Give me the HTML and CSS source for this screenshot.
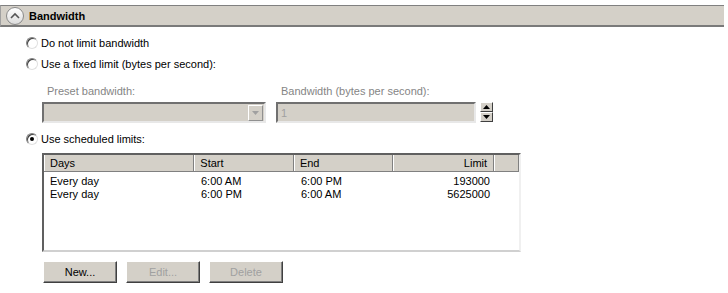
FILE: index.html
```html
<!DOCTYPE html>
<html lang="en">
<head>
  <meta charset="UTF-8" />
  <title>Bandwidth</title>
  <link rel="stylesheet" href="styles.css">
</head>
<body>

  <div class="section-header">
    <span class="collapse-btn">
      <svg width="12" height="8" viewBox="0 0 12 8"><path d="M2 6 L6 2 L10 6" fill="none" stroke="#555" stroke-width="1.6"/></svg>
    </span>
    <span class="section-title">Bandwidth</span>
  </div>

  <div class="content">
    <label class="radio-row"><span class="radio"></span>Do not limit bandwidth</label>
    <label class="radio-row"><span class="radio"></span>Use a fixed limit (bytes per second):</label>

    <div class="fixed-limit">
      <div class="field preset">
        <div class="field-label">Preset bandwidth:</div>
        <div class="combo">
          <span class="combo-value"></span>
          <span class="combo-arrow"><svg width="7" height="4" viewBox="0 0 7 4"><path d="M0 0 H7 L3.5 4 Z" fill="#a0a0a0"/></svg></span>
        </div>
      </div>
      <div class="field amount">
        <div class="field-label">Bandwidth (bytes per second):</div>
        <div class="spin-wrap">
          <div class="textbox">1</div>
          <div class="spin">
            <span class="spin-btn"><svg width="7" height="4" viewBox="0 0 7 4"><path d="M0 4 H7 L3.5 0 Z" fill="#000"/></svg></span>
            <span class="spin-btn"><svg width="7" height="4" viewBox="0 0 7 4"><path d="M0 0 H7 L3.5 4 Z" fill="#000"/></svg></span>
          </div>
        </div>
      </div>
    </div>

    <label class="radio-row scheduled"><span class="radio checked"></span>Use scheduled limits:</label>

    <div class="listview">
      <div class="list-head">
        <span class="col days">Days</span>
        <span class="col start">Start</span>
        <span class="col end">End</span>
        <span class="col limit">Limit</span>
        <span class="col filler"></span>
      </div>
      <div class="list-row">
        <span class="col days">Every day</span>
        <span class="col start">6:00 AM</span>
        <span class="col end">6:00 PM</span>
        <span class="col limit">193000</span>
      </div>
      <div class="list-row">
        <span class="col days">Every day</span>
        <span class="col start">6:00 PM</span>
        <span class="col end">6:00 AM</span>
        <span class="col limit">5625000</span>
      </div>
    </div>

    <div class="buttons">
      <button type="button">New...</button>
      <button type="button" disabled>Edit...</button>
      <button type="button" disabled>Delete</button>
    </div>
  </div>

</body>
</html>
```

FILE: styles.css
```css
* {
  box-sizing: border-box;
  margin: 0;
  padding: 0;
}

body {
  background-color: #fff;
  font-family: 'Liberation Sans', Arial, sans-serif;
  font-size: 11px;
  color: #000;
  width: 728px;
  height: 293px;
  overflow: hidden;
}

.section-header {
  display: flex;
  align-items: center;
  height: 22px;
  margin-top: 5px;
  margin-right: 4px;
  padding-left: 5px;
  background-color: #d4d0c8;
  border-top: 1px solid #808080;
  border-bottom: 2px solid #7a7a7a;
  border-left: 1px solid #a0a0a0;
}

.collapse-btn {
  display: flex;
  align-items: center;
  justify-content: center;
  width: 18px;
  height: 18px;
  border-radius: 50%;
  border: 1px solid #8a8a8a;
  background: linear-gradient(#ffffff, #dcdcdc);
}

.section-title {
  font-weight: bold;
  margin-left: 5px;
}

.content {
  padding-left: 26px;
}

.radio-row {
  display: flex;
  align-items: center;
  height: 21px;
}

.radio-row:first-child {
  margin-top: 5px;
}

.radio {
  width: 12px;
  height: 12px;
  margin-right: 3px;
  border-radius: 50%;
  background: #fff;
  border: 1px solid;
  border-color: #808080 #e0e0e0 #e0e0e0 #808080;
  box-shadow: inset 1px 1px 0 #404040;
  position: relative;
}

.radio.checked::after {
  content: '';
  position: absolute;
  left: 3px;
  top: 3px;
  width: 4px;
  height: 4px;
  border-radius: 50%;
  background: #000;
}

.fixed-limit {
  display: flex;
  margin-top: 11px;
  margin-left: 16px;
}

.field-label {
  color: #858585;
  padding-left: 5px;
  height: 17px;
}

.field.preset {
  width: 224px;
}

.field.amount {
  margin-left: 10px;
}

.combo,
.textbox {
  display: flex;
  align-items: center;
  height: 21px;
  background-color: #d4d0c8;
  border: 2px solid;
  border-color: #707070 #e8e8e8 #e8e8e8 #707070;
}

.combo {
  justify-content: flex-end;
  padding-right: 1px;
}

.combo-arrow {
  display: flex;
  align-items: center;
  justify-content: center;
  width: 15px;
  height: 16px;
  border: 1px solid;
  border-color: #fff #909090 #909090 #fff;
}

.spin-wrap {
  display: flex;
}

.textbox {
  width: 200px;
  color: #a0a0a0;
  padding-left: 3px;
}

.spin {
  display: flex;
  flex-direction: column;
  margin-left: 4px;
  width: 13px;
}

.spin-btn {
  display: flex;
  align-items: center;
  justify-content: center;
  height: 10px;
  background-color: #d4d0c8;
  border: 1px solid;
  border-color: #fff #404040 #404040 #fff;
}

.radio-row.scheduled {
  margin-top: 5px;
}

.listview {
  width: 479px;
  height: 99px;
  margin-left: 16px;
  margin-top: 4px;
  border: 2px solid;
  border-color: #606060 #f0f0f0 #d0d0d0 #606060;
  background: #fff;
}

.list-head {
  display: flex;
  height: 17px;
  background-color: #d4d0c8;
  border-bottom: 1px solid #808080;
}

.list-head .col {
  display: flex;
  align-items: center;
  padding: 0 6px;
  border-right: 1px solid #808080;
  box-shadow: inset 1px 0 0 #fff;
}

.list-row {
  display: flex;
  height: 13px;
  line-height: 13px;
}

.list-head + .list-row {
  margin-top: 3px;
}

.list-row .col {
  padding: 0 6px;
}

.col.days { width: 151px; }
.col.start { width: 100px; }
.col.end { width: 100px; }
.col.limit { width: 101px; justify-content: flex-end; text-align: right; }
.col.filler { width: 25px; }

.buttons {
  display: flex;
  gap: 9px;
  margin-left: 17px;
  margin-top: 9px;
}

button {
  width: 74px;
  height: 22px;
  font-family: inherit;
  font-size: 11px;
  color: #000;
  background-color: #d4d0c8;
  border: 1px solid;
  border-color: #fff #404040 #404040 #fff;
  box-shadow: inset -1px -1px 0 #808080;
}

button:disabled {
  color: #a0a0a0;
}
```
